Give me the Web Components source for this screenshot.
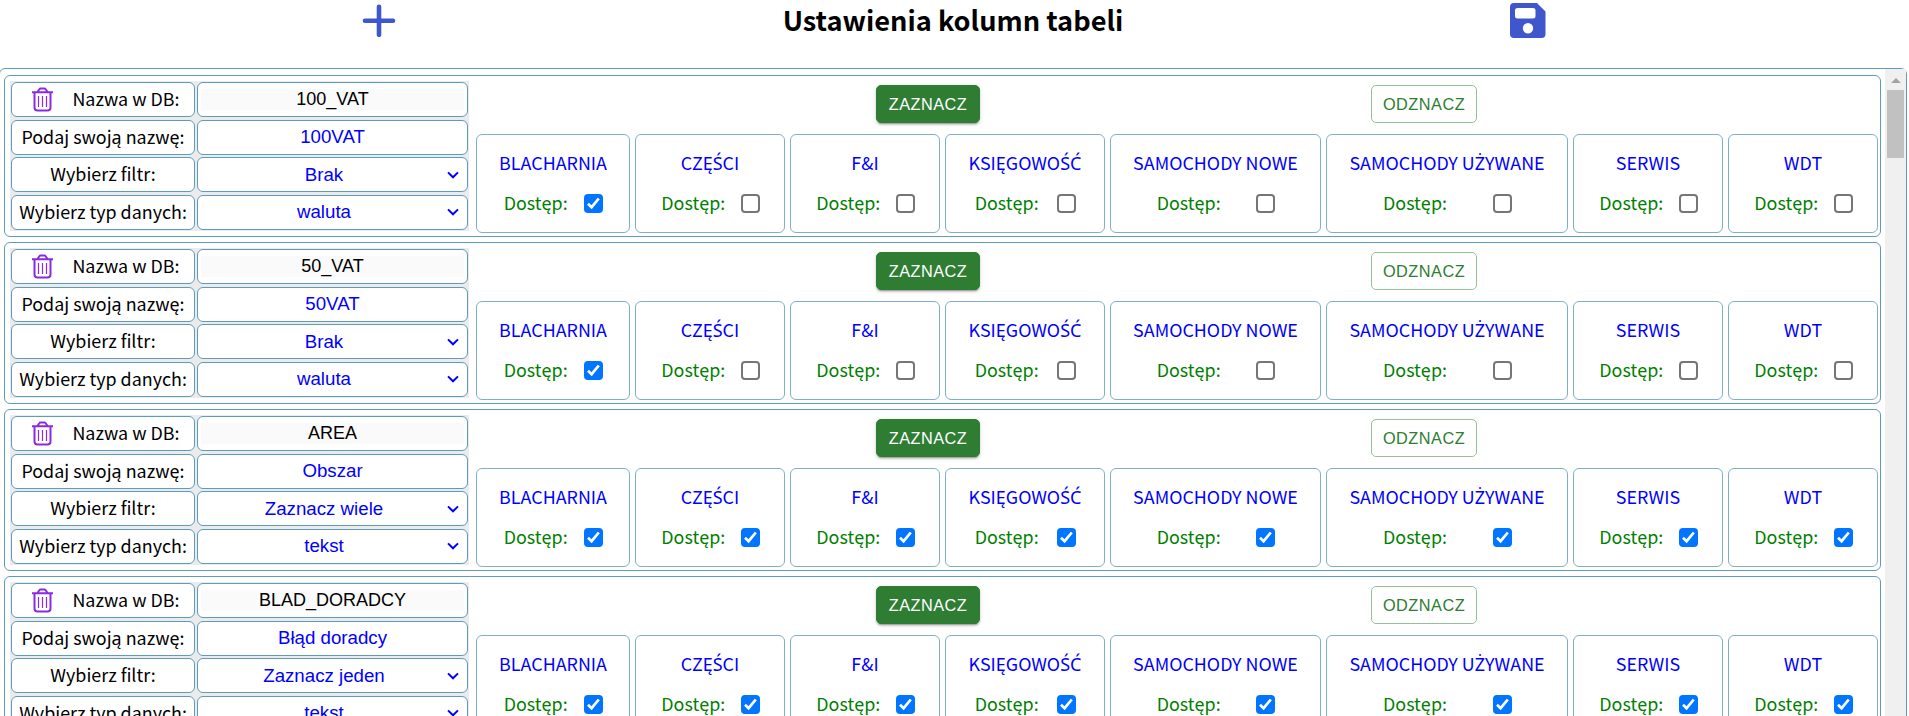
<!DOCTYPE html><html lang="pl"><head><meta charset="utf-8"><title>Ustawienia</title>
<style>html,body{margin:0;height:716px;overflow:hidden;background:#fff}
body{font-family:"Noto Sans CJK SC","Noto Sans",sans-serif;font-size:17.9px;line-height:24px}</style></head><body>
<settings-page></settings-page>
<script>
const define=(name,css,html)=>customElements.define(name,class extends HTMLElement{
  constructor(){super();this.attachShadow({mode:'open'})}
  connectedCallback(){this.shadowRoot.innerHTML='<style>*{box-sizing:border-box}:host{box-sizing:border-box}'+css+'</style>'+(typeof html==='function'?html(this):html)}
});
const departments=['BLACHARNIA','CZĘŚCI','F&amp;I','KSIĘGOWOŚĆ','SAMOCHODY NOWE','SAMOCHODY UŻYWANE','SERWIS','WDT'];
// Capitals with an acute or a dot above are set in Noto Sans, which has them precomposed.
const accents=t=>t.replace(/[ŚĆŻ]+/g,m=>`<span class="x">${m}</span>`);
define('field-cell',`:host{display:flex;align-items:center;justify-content:center;background:#fff;border:1px solid #5f9bbd;border-radius:6px;min-width:0;white-space:nowrap;padding-bottom:3px}`,'<slot></slot>');
define('value-cell',`:host{display:grid;grid-template-columns:1fr;background:#fff;border:1px solid #5f9bbd;border-radius:6px;color:#00f;font:18.7px "Liberation Sans",Arial,sans-serif;padding:0 3px}
 :host([readonly]){color:#000;font-size:18px}div{display:flex;align-items:center;justify-content:center;padding-bottom:1px}
 :host([readonly]) div{background:#fafafa;height:21px;margin-top:6px;padding:0}
 :host([select]){grid-template-columns:1fr 14px;padding:0 7px 0 4px}:host([select]) div{padding:0}svg{align-self:center;width:14px;height:10px}`,
 h=>'<div><slot></slot></div>'+(h.hasAttribute('select')?'<svg viewBox="0 0 14 10"><path d="M2 2.4 7 7.3 12 2.4" fill="none" stroke="#00f" stroke-width="2"/></svg>':''));
define('trash-icon',':host{display:block;width:21px;height:25px}svg{display:block}',
 '<svg width="21" height="25" viewBox="0 0 21 25" fill="none" stroke="#8a2be2" stroke-width="2"><path d="M0 5.2H21M5.500 5 7.300 2.300Q7.800 1.500 8.800 1.500H12.200Q13.200 1.500 13.700 2.300L15.500 5M2.500 5V20.500Q2.500 23.500 5.500 23.500H15.500Q18.500 23.500 18.500 20.500V5"/><path d="M6.500 9V20M10.500 9V20M14.500 9V20" stroke-width="1.200"/></svg>');
define('check-box',`:host{display:block;width:19px;height:19px;border:2px solid #767676;border-radius:4px;background:#fff}:host([checked]){background:#0075ff;border-color:#0075ff}svg{display:none}:host([checked]) svg{display:block;margin:-2px}`,
 '<svg width="19" height="19" viewBox="0 0 19 19"><path d="M4 9.800 7.600 13.200 14.800 4.500" fill="none" stroke="#fff" stroke-width="2.700"/></svg>');
define('access-card',`:host{display:grid;grid-template-rows:24px 24px;align-content:start;row-gap:17px;padding-top:15px;border:1px solid #7fb0cb;border-radius:6px;color:#00f;text-align:center;white-space:nowrap}
 .a{display:flex;justify-content:space-evenly;align-items:center;color:green;padding:0 9px 0 10px}.a span{margin-top:-2px}`,
 h=>`<div><slot></slot></div><div class="a"><span>Dostęp:</span><check-box ${h.hasAttribute('checked')?'checked':''}></check-box></div>`);
define('action-button',`:host{display:flex;align-items:center;justify-content:center;width:106px;height:38px;border:1px solid #97c099;border-radius:5px;color:#2e7d32;font:400 16.3px/24px "Liberation Sans",Arial,sans-serif;letter-spacing:.5px;padding-bottom:1px}
 :host([filled]){width:104px;background:#2e7d32;color:#fff;border-color:#2e7d32;box-shadow:0 3px 1px -2px #0003,0 2px 2px #00000024,0 1px 5px #0000001f}`,'<slot></slot>');
define('column-row',`:host{display:grid;grid-template-columns:459px 1403px;column-gap:7px;height:162px;border:1px solid #5f9bbd;border-radius:6px;padding:5px 0 0 5px}
 .f{display:grid;grid-template-columns:184px 271px;grid-template-rows:35px 35px 35px 35px;row-gap:2.660px;column-gap:2px;background:#ebebeb;height:150px;padding:1px}
 trash-icon{margin:2px 19px 0 0}.first{padding-left:6px}
 .btns{display:flex;justify-content:space-evenly;padding:4px 11px 0 9px;height:53px}
 .c{display:grid;grid-template-columns:154px 150px 150px 160px 211px 242px 150px 150px;gap:5px;height:99px}
 .x{font-family:"Noto Sans",sans-serif;font-size:18px;line-height:1}`,
 h=>{const all=h.getAttribute('access')==='all';return `<div class="f"><field-cell class="first"><trash-icon></trash-icon>Nazwa w DB:</field-cell><value-cell readonly>${h.getAttribute('db')}</value-cell>
 <field-cell>Podaj swoją nazwę:</field-cell><value-cell>${h.getAttribute('label')}</value-cell><field-cell>Wybierz filtr:</field-cell><value-cell select>${h.getAttribute('filter')}</value-cell><field-cell>Wybierz typ danych:</field-cell><value-cell select>${h.getAttribute('type')}</value-cell></div>
 <div><div class="btns"><action-button filled>ZAZNACZ</action-button><action-button>ODZNACZ</action-button></div><div class="c">${departments.map((d,i)=>`<access-card ${all||!i?'checked':''}>${accents(d)}</access-card>`).join('')}</div></div>`});
define('scroll-bar',`:host{display:flex;flex-direction:column;align-items:center;background:#f0f0f0;width:21px;padding:9px 0 0}svg{display:block}i{display:block;width:17px;height:68px;margin-top:7px;background:#c1c1c1}`,
 '<svg width="10" height="5" viewBox="0 0 10 5"><path d="M0 5 5 0 10 5Z" fill="#a3a3a3"/></svg><i></i>');
define('page-header',`:host{display:grid;grid-template-columns:757px 392px 758px;height:68px;padding-top:3px}div{display:flex;justify-content:center}h1{margin:-1px 0 0;font-size:27.2px;line-height:34px;text-align:center;white-space:nowrap}svg{display:block}`,
 `<div><svg width="34" height="34" viewBox="0 -0.800 34 34"><path d="M17 3V31M3 17H31" stroke="#3f56cc" stroke-width="4.600" stroke-linecap="round"/></svg></div><h1>Ustawienia kolumn tabeli</h1><div><svg width="36" height="36" viewBox="0 0 36 36"><path fill="#3f56cc" fill-rule="evenodd" d="M4 0H27L35.500 8.500V31Q35.500 35 31.500 35H4Q0 35 0 31V4Q0 0 4 0ZM7.500 5Q5 5 5 7.500V13Q5 15.500 7.500 15.500H23Q25.500 15.500 25.500 13V7.500Q25.500 5 23 5ZM18 20A5.200 5.200 0 1 0 18 30.400A5.200 5.200 0 1 0 18 20Z"/></svg></div>`);
define('settings-page',`:host{display:block;height:716px;overflow:hidden}.l{display:grid;grid-template-columns:1877px 21px;justify-content:space-between;width:1908px;margin-left:-1px;height:720px;border:1px solid #5f9bbd;border-radius:6px;padding-left:4px}.r{display:grid;grid-auto-rows:162px;gap:5px;padding-top:6px;align-content:start}`,
 `<page-header></page-header><div class="l"><div class="r"><column-row db="100_VAT" label="100VAT" filter="Brak" type="waluta"></column-row><column-row db="50_VAT" label="50VAT" filter="Brak" type="waluta"></column-row><column-row access="all" db="AREA" label="Obszar" filter="Zaznacz wiele" type="tekst"></column-row><column-row access="all" db="BLAD_DORADCY" label="Błąd doradcy" filter="Zaznacz jeden" type="tekst"></column-row></div><scroll-bar></scroll-bar></div>`);
</script></body></html>
